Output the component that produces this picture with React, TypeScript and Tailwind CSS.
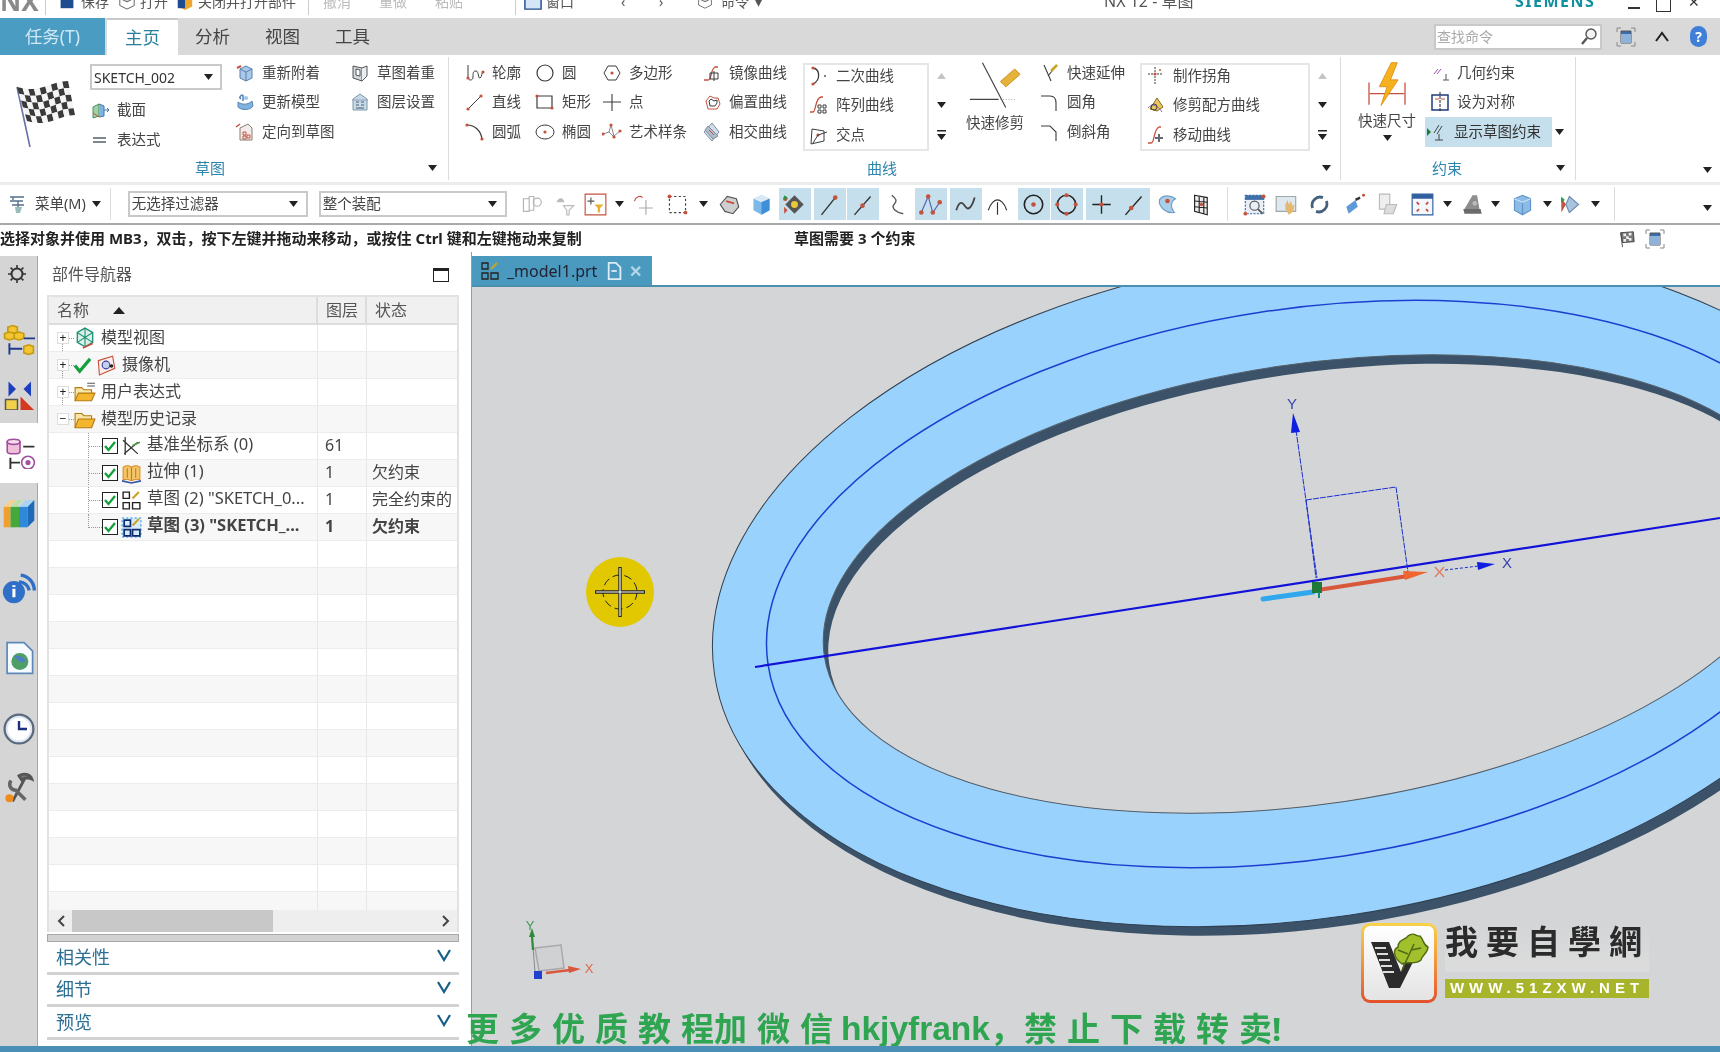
import React from 'react';

const RED = '#c4523e';
const INK = '#3c3c3c';

type Pt = [number, number];

// ---- small icons, 20 unit box
const dot = (x: number, y: number, r = 1.6) => <circle cx={x} cy={y} r={r} fill={RED} stroke="none" />;

const ICONS: Record<string, React.ReactNode> = {
  reattach: <><path d="M5 6l6-3 6 3v9l-6 3-6-3z" fill="#a9c9ea" stroke="#5a7fa8" /><path d="M11 9v9M5 6l6 3 6-3" stroke="#5a7fa8" fill="none" /><path d="M2 5l4-2" stroke={RED} strokeWidth="2" /></>,
  update: <><path d="M3 10c4 3 10 3 14-1l1 5c-2 4-11 5-15 1z" fill="#7fb2de" stroke="#5a86b5" /><path d="M8 9V3m0 0C5 3 4 6 6 7" stroke="#5a86b5" strokeWidth="1.6" fill="none" /><circle cx="11" cy="6" r="2" fill="#9cc6e8" /></>,
  orient: <><path d="M5 6l8-4 4 4v12H5z" fill="#f3ecea" stroke="#8a7a75" /><path d="M8 10h3v3H8zM12 13h3v3h-3zM8 14h3v3H8z" fill="none" stroke={RED} /><path d="M1 5l4-3" stroke={RED} strokeWidth="1.5" /></>,
  weight: <><path d="M3 3l9 2v13l-9-3z" fill="#cfd6dc" stroke="#555" /><path d="M12 5l5-2v10l-5 5" fill="#e8edf0" stroke="#555" /><path d="M6 6l4 1v6l-4-1z" fill="#fff" stroke="#555" /></>,
  layers: <><path d="M3 7l7-5 7 5v11H3z" fill="#c6dbe6" stroke="#7c99a8" /><path d="M6 10h3M11 10h3M6 13h3M11 13h3M6 16h8" stroke="#557" /><path d="M2 8h16" stroke="#99b" /></>,
  section: <><path d="M3 7l6-3v12l-6 2z" fill="#9fd0a8" stroke="#4f8f5f" /><path d="M9 4l5 2v10l-5 1" fill="#7db4e0" stroke="#3f77aa" /><path d="M14 10h5m-2-2l2 2-2 2" stroke="#3f77aa" fill="none" /><path d="M3 13l6 4" stroke={RED} /></>,
  equals: <path d="M3 8h13M3 12h13" stroke="#55606a" strokeWidth="1.6" />,
  profile: <><path d="M3 2v12c0 4 5 4 5 0s0-6 3-6 2 8 4 7 2-6 3-7" stroke={INK} fill="none" />{dot(3, 15)}{dot(18, 9)}</>,
  circle: <circle cx="10" cy="10" r="8" fill="none" stroke={INK} strokeWidth="1.2" />,
  hexagon: <><path d="M6 3h8l4 7-4 7H6l-4-7z" fill="none" stroke={INK} />{dot(10, 10)}</>,
  mirror: <><path d="M2 17h4c4 0 2-10 7-13h3" stroke={RED} strokeWidth="1.3" fill="none" /><path d="M8 10h8v6H8zM12 8v10" stroke={INK} fill="none" /></>,
  line: <><path d="M3 17L16 4" stroke={INK} />{dot(3, 17)}{dot(16, 4)}</>,
  rect: <><path d="M2 4h15v12H2z" fill="none" stroke={INK} strokeWidth="1.2" />{dot(2, 4)}{dot(17, 16)}</>,
  point: <path d="M10 2v17M1 10h18" stroke={INK} strokeWidth="1.1" />,
  offset: <><path d="M4 9l4-5 4 2 4 0 2 6-3 5H6z" fill="none" stroke={RED} /><path d="M7 9l2-2 3 2 3-1 0 3-2 3H8z" fill="none" stroke={INK} /></>,
  arc: <><path d="M2 3c8 0 14 6 15 14" stroke={INK} strokeWidth="1.2" fill="none" />{dot(2, 3)}{dot(17, 17)}</>,
  ellipse: <><ellipse cx="10" cy="10" rx="9" ry="7" fill="none" stroke={INK} />{dot(10, 10)}</>,
  spline: <><path d="M1 12l6-2 2-7 3 11 6-5M7 10l5 5" stroke="#888" fill="none" />{dot(9, 3)}{dot(1, 12)}{dot(12, 15)}{dot(18, 9)}</>,
  intersect: <><path d="M10 1l7 9-7 9-8-9z" fill="#d4dee8" stroke="#7d8fa0" /><path d="M6 4l10 10-5 3L3 8z" fill="#aebccb" stroke="#7d8fa0" /><path d="M7 8l5 5" stroke={RED} /></>,
  conic: <><path d="M4 2c7 1 8 12 0 16" stroke={INK} strokeWidth="1.3" fill="none" />{dot(4, 2)}{dot(4, 18)}<circle cx="16" cy="10" r="1" fill="#555" /></>,
  pattern: <><path d="M1 17h3c3 0 2-14 8-15h2" stroke={RED} strokeWidth="1.3" fill="none" /><path d="M9 10h3v3H9zM14 10h3v3h-3zM9 15h3v3H9zM14 15h3v3h-3z" stroke={INK} fill="none" /></>,
  ipoint: <><path d="M3 4l12 2v10l-13 3z" fill="none" stroke={INK} />{dot(9, 10)}<path d="M9 10L4 18M9 10l9-3" stroke={INK} /></>,
  extend: <><path d="M4 2l7 16M17 2L8 13" stroke={INK} strokeWidth="1.1" /><path d="M17 2l-6 6" stroke="#c9a227" strokeWidth="2.5" /></>,
  fillet: <path d="M1 4h9c4 0 6 3 6 7v8" stroke={INK} fill="none" strokeWidth="1.1" />,
  chamfer: <path d="M1 4h9l6 6v9" stroke={INK} fill="none" strokeWidth="1.1" />,
  corner: <><path d="M9 1v18M2 8h14" stroke={INK} strokeDasharray="2 1" />{dot(9, 8)}{dot(14, 4, 1)}</>,
  recipe: <><path d="M4 14L11 3l6 9-6 4z" fill="#e9c75a" stroke="#8a6a1f" /><path d="M2 13c4-5 10-3 14 4" stroke="#8d6ea8" fill="none" /><circle cx="8" cy="12" r="3" fill="none" stroke="#444" /></>,
  move: <><path d="M2 18h3c4 0 2-13 8-16h2" stroke={RED} strokeWidth="1.3" fill="none" /><path d="M13 9v8M9 13h8" stroke="#667" strokeWidth="2" /></>,
  geom: <><path d="M4 11l4-5M7 11l4-5" stroke="#a050b0" /><path d="M13 17h6M16 11v6" stroke="#555" /></>,
  symm: <><path d="M2 3h16v15H2z" fill="none" stroke="#1f3b7a" strokeWidth="1.5" /><path d="M10 0v20" stroke="#222" strokeDasharray="3 1" /><path d="M5 7l4 0M11 7h4" stroke={RED} /></>,
  showc: <><path d="M1 6l4 4-4 4z" fill="#1b7c34" /><path d="M8 11l5-8M11 12l5-8" stroke="#444" /><path d="M9 18h8M13 12v6" stroke="#444" /></>,
  // toolbar
  menu: <><path d="M2 3h14M5 3v3M2 7h13M4 11h12M10 7v12" stroke="#56708a" strokeWidth="1.4" /><path d="M7 13h7l-2 6H8z" fill="#9bb" /></>,
  g1: <><path d="M3 5h5v11H3zM8 3h4v12H8z" fill="none" stroke="#b5b5b5" /><circle cx="15" cy="8" r="3.5" fill="none" stroke="#b5b5b5" /></>,
  g2: <><path d="M3 8c2-5 6-4 7 0" fill="#bbb" /><path d="M9 11h9l-4 4v4h-2v-4z" fill="none" stroke="#bbb" /></>,
  filter: <><path d="M1 1h18v18H1z" fill="#fff" stroke={RED} /><path d="M6 4v6M3 7h6" stroke="#555" /><path d="M9 10h8l-3 3v4h-2v-4z" fill="#e8b030" /></>,
  g3: <><path d="M3 7c1-4 5-5 7-3" stroke={RED} fill="none" /><path d="M13 6v13M7 13h12" stroke="#aaa" /></>,
  dashrect: <><path d="M3 3h14v14H3z" fill="none" stroke="#444" strokeDasharray="2 2" />{dot(3, 3)}{dot(17, 17)}</>,
  solid: <><path d="M2 10l6-7 8 2 2 7-5 6-7-2z" fill="#cfcfcf" stroke="#555" /><path d="M7 7l7 2" stroke={RED} strokeWidth="1.5" /></>,
  cube: <><path d="M3 5l7-3 7 3v10l-7 4-7-4z" fill="#7db8ea" /><path d="M3 5l7 3 7-3-7-3z" fill="#dbe9f5" /><path d="M10 8v11l7-4V5z" fill="#3f8fd8" /></>,
  snap: <><path d="M10 2l8 8-8 8-8-8z" fill="#555" /><circle cx="10" cy="10" r="3" fill="#e7c83a" />{dot(2, 5, 2)}<path d="M1 12l3 3-3 3z" fill={RED} /><path d="M1 2l3 2-3 2z" fill="#1b9c44" /></>,
  pend: <><path d="M3 19L15 4" stroke="#333" strokeWidth="1.2" />{dot(15, 4, 2)}</>,
  pmid: <><path d="M3 19L17 3" stroke="#333" strokeWidth="1.2" />{dot(10, 11, 2)}</>,
  pcurve: <path d="M5 2c4 3 5 5 2 8s2 7 8 8" stroke="#555" fill="none" strokeWidth="1.2" />,
  pspline: <><path d="M2 17L8 3l4 14 6-9" stroke="#5560b0" fill="none" />{dot(8, 3, 2)}{dot(2, 17, 2)}{dot(12, 17, 2)}{dot(18, 8, 2)}</>,
  pwave: <path d="M2 15c3-10 6-6 8-3s5 2 8-8" stroke="#444" fill="none" strokeWidth="1.6" />,
  ptan: <path d="M10 19V8M2 15c2-7 6-9 8-9s6 2 8 9" stroke="#333" fill="none" />,
  pcirc: <><circle cx="10" cy="10" r="8" fill="none" stroke="#222" strokeWidth="1.4" />{dot(10, 10, 2)}</>,
  pquad: <><circle cx="10" cy="10" r="8" fill="none" stroke="#222" strokeWidth="1.4" />{dot(10, 2, 1.8)}{dot(10, 18, 1.8)}{dot(2, 10, 1.8)}{dot(18, 10, 1.8)}</>,
  pplus: <><path d="M10 2v16M2 10h16" stroke="#222" strokeWidth="1.2" />{dot(10, 10, 1.8)}</>,
  pline: <><path d="M3 19L17 3" stroke="#222" strokeWidth="1.2" />{dot(8, 13, 2)}</>,
  psurf: <><path d="M3 6c3-5 10-4 14-1-4 2-5 7-1 12-6 1-14-4-13-11z" fill="#a9cfe9" stroke="#6f9cc0" />{dot(10, 7, 2)}</>,
  pgrid: <><path d="M4 2l11 2v15L4 16z" fill="#eee" stroke="#222" /><path d="M8 3v14M12 4v14M4 7l11 1M4 12l11 1" stroke="#222" />{dot(10, 10, 1.5)}</>,
  fit: <><path d="M2 2h16v16H2z" fill="#e7eef6" stroke="#3f6fa8" strokeDasharray="2 1" /><path d="M2 2h16v4H2z" fill="#3f6fa8" /><circle cx="10" cy="11" r="4" fill="none" stroke="#555" /><path d="M13 14l4 4" stroke="#555" strokeWidth="1.5" />{dot(2, 18)}{dot(18, 3)}</>,
  pan: <><path d="M1 3h17v13H1z" fill="#dfe7ef" stroke="#9aa" /><path d="M9 10l2-4 1 4 2-3 1 4 2-1-1 6-4 3-3-5z" fill="#e5b870" /></>,
  rotate: <path d="M4 13a7 7 0 0 1 9-9M16 7a7 7 0 0 1-9 9" stroke="#45617d" strokeWidth="2.4" fill="none" />,
  brush: <><path d="M2 12l8-6 2 6-8 6z" fill="#5f9ad8" /><path d="M10 6l4-2" stroke="#333" strokeWidth="2" />{dot(17, 2, 1.3)}</>,
  gray2: <><path d="M3 1h9v13H3z" fill="#eee" stroke="#bbb" /><path d="M9 10l9 0-3 8H7z" fill="#ddd" stroke="#bbb" /></>,
  views: <><path d="M1 1h18v18H1z" fill="#f4f7fb" stroke="#2f5f9f" /><path d="M1 1h18v4H1z" fill="#2f5f9f" /><path d="M5 8l2 2M15 8l-2 2M5 16l2-2M15 16l-2-2" stroke={RED} strokeWidth="1.6" /></>,
  camera: <><path d="M3 14L10 2h4l2 12z" fill="#8d8d8d" /><path d="M2 14h15l1 4H3z" fill="#6b6b6b" /><circle cx="12" cy="9" r="2" fill="#bbb" /></>,
  box: <><path d="M3 5l7-3 7 3v10l-7 4-7-4z" fill="#8bbbe6" stroke="#5f95c7" /><path d="M10 8v11" stroke="#5f95c7" /><path d="M3 5l7 3 7-3" stroke="#cfe3f5" fill="none" /></>,
  clip: <><path d="M9 3l8 7-8 7-3-7z" fill="#a8c4de" stroke="#6f8faf" /><path d="M2 4l4 6-4 7z" fill={RED} /><path d="M2 3l3 3-3 2z" fill="#1b9c44" /></>,
  // rail
  assembly: <><path d="M3 2l3-1 3 1v3l-3 1-3-1z" fill="#f3c530" stroke="#c59a10" /><path d="M1 6l3-1 3 1v3l-3 1-3-1zM7 6l3-1 3 1v3l-3 1-3-1z" fill="#f3c530" stroke="#c59a10" /><path d="M13 14l3-1 3 1v4l-3 1-3-1z" fill="#f3c530" stroke="#c59a10" /><path d="M4 12v7M4 15.5h8M13 9h7" stroke="#1e3a8a" strokeWidth="1.2" /></>,
  bowtie: <><path d="M3 1l5 5-5 5zM18 1l-5 5 5 5z" fill="#1c3fbe" /><path d="M1 13h8v7H1z" fill="#f3d04a" stroke="#555" /><path d="M11 20v-9l9 9z" fill="#d43a1f" /></>,
  dbtree: <><path d="M2 3v6c0 2 8 2 8 0V3z" fill="#f0c0d8" stroke="#a050a0" /><ellipse cx="6" cy="3" rx="4" ry="1.6" fill="#f8dcea" stroke="#a050a0" /><path d="M12 6h7M4 13v7M4 16h6" stroke="#333" strokeWidth="1.2" /><circle cx="15" cy="16" r="4" fill="none" stroke="#a050a0" /><circle cx="15" cy="16" r="1.6" fill="#a050a0" /></>,
  books: <><path d="M1 7l4-4h3l-3 4z" fill="#f7cf8a" /><path d="M1 7h4v12H1z" fill="#f0a030" /><path d="M5 7l4-4h3l-3 4z" fill="#b8e0a8" /><path d="M5 7h5v12H5z" fill="#45a838" /><path d="M10 7l4-4h5l-4 4z" fill="#a8d4f4" /><path d="M10 7h5v12h-5z" fill="#2f88d8" /><path d="M15 7l4-4v12l-4 4z" fill="#1e6ab8" /></>,
  info: <><path d="M11 3a9 9 0 0 1 8 9M10 7a6 6 0 0 1 6 5" stroke="#2f6fc8" strokeWidth="2" fill="none" /><circle cx="7" cy="13" r="6.5" fill="#2f6fc8" /><path d="M7 11v5M7 9v1" stroke="#fff" strokeWidth="1.8" /></>,
  globe: <><path d="M3 1h10l5 5v13H3z" fill="#f6fbff" stroke="#5d88b8" /><circle cx="10.5" cy="12" r="5" fill="#4e9f66" /><path d="M7 9c3-1 6 0 7 3-3 2-5-1-7-3z" fill="#4c7fc0" /></>,
  clock: <><circle cx="10" cy="10" r="9" fill="#dfe8f3" stroke="#5a6a7c" strokeWidth="1.4" /><circle cx="10" cy="10" r="7" fill="#fff" /><path d="M10 5v5h5" stroke="#1f2f80" strokeWidth="1.5" fill="none" /></>,
  tools: <><path d="M6 19L14 4M10 3c3-2 7-1 8 2-2-1-5-1-6 1z" stroke="#555" strokeWidth="1.8" fill="#777" /><path d="M5 6c-2 3 0 6 3 6l6 6" stroke="#666" strokeWidth="2.2" fill="none" /><circle cx="4" cy="17" r="2.5" fill="#ee8c1e" /></>,
  gear: <><circle cx="10" cy="10" r="5.5" fill="none" stroke="#333" strokeWidth="2" /><path d="M10 1v3M10 16v3M1 10h3M16 10h3M3.6 3.6l2 2M14.4 14.4l2 2M3.6 16.4l2-2M14.4 5.6l2-2" stroke="#333" strokeWidth="1.6" /></>,
  // tree
  tview: <><path d="M10 1l7 4v9l-7 4-7-4V5z" fill="#d8f0e8" stroke="#1f8f74" strokeWidth="1.2" /><path d="M10 1v17M3 5l14 9M17 5L3 14" stroke="#1f8f74" /><path d="M8 19l9-4" stroke={RED} strokeWidth="1.5" /></>,
  check: <path d="M2 10l5 6L18 3" stroke="#14a03c" strokeWidth="3.4" fill="none" />,
  tcam: <><path d="M3 6l13-4 2 11L4 19z" fill="#fbeeea" stroke={RED} /><circle cx="10" cy="10" r="3.5" fill="#c5cff0" stroke="#3040a0" /><circle cx="15" cy="11" r="1.6" fill="#222" /></>,
  folder: <><path d="M1 18V5h6l2 2h7v3" fill="#f8e6a8" stroke="#b57a10" /><path d="M1 18l3-8h15l-3 8z" fill="#f3b62e" stroke="#b57a10" /></>,
  folderx: <><path d="M1 18V6h6l2 2h7v3" fill="#f8e6a8" stroke="#b57a10" /><path d="M1 18l3-7h15l-3 7z" fill="#f3b62e" stroke="#b57a10" /><path d="M12 2h7M12 4.5h7" stroke="#555" /></>,
  datum: <><path d="M4 1v17M2 4l14 13M3 17l13-11" stroke="#333" strokeWidth="1.2" /><path d="M11 9l7-3" stroke="#4a9c40" strokeWidth="1.6" /></>,
  extrude: <><path d="M2 4c3-2 5-2 8 0 3-2 5-2 8 0v12c-3-1-5-1-8 1-3-2-5-2-8-1z" fill="#f4c468" stroke="#d98b20" /><path d="M10 4v13M6 5v9M14 5v9" stroke="#c77a10" /><path d="M1 17l9 2 9-2" stroke="#3554a8" strokeWidth="1.6" fill="none" /></>,
  sketch: <><path d="M2 2h6v6H2zM11 12h7v6h-7zM2 12h6v6H2z" fill="none" stroke="#222" strokeWidth="1.3" /><path d="M11 8l6-6" stroke="#c9a227" strokeWidth="2" /></>,
  sketchact: <><path d="M1 1h18v18H1z" fill="#d4ecfb" stroke="#2a8fe0" strokeDasharray="2 2" /><path d="M3 3h6v6H3zM11 12h7v6h-7zM3 12h6v6H3z" fill="none" stroke="#102a70" strokeWidth="1.6" /><path d="M11 8l6-6" stroke="#c9a227" strokeWidth="2" /></>,
  save: <><path d="M2 1h16v18H2z" fill="#1f4b8f" /><path d="M5 1h10v6H5z" fill="#dfe8f3" /></>,
  open: <><path d="M2 7l8-4 8 4-8 4z" fill="#cfcfcf" stroke="#555" /><path d="M2 7v8l8 4 8-4V7" fill="none" stroke="#555" /></>,
  orange: <><path d="M2 8l8-5 8 5v8l-8 4-8-4z" fill="#f0a62a" /><path d="M2 8h8v10H2z" fill="#1f4b8f" /></>,
  windowi: <><path d="M1 1h18v18H1z" fill="#d3e5f7" stroke="#1f4b8f" strokeWidth="1.6" /></>,
  dock: <><path d="M1 5V1h4M15 1h4v4M19 15v4h-4M5 19H1v-4" stroke="#888" fill="none" /><path d="M5 4h10v12H5z" fill="#3a6ea8" stroke="#555" /><path d="M5 7h10v9H5z" fill="#8fb3d8" /></>,
  docki: <><path d="M3 1h8l5 5v13H3z" fill="#4a9ac0" stroke="#dcecf7" strokeWidth="2" /><path d="M6 10h6" stroke="#dcecf7" strokeWidth="2" /></>,
};

function Ic({ n, s = 20, className = '' }: { n: string; s?: number; className?: string }) {
  return (
    <svg width={s} height={s} viewBox="0 0 20 20" className={'shrink-0 ' + className}>
      {ICONS[n]}
    </svg>
  );
}

function Down({ className = '' }: { className?: string }) {
  return (
    <svg width="9" height="6" viewBox="0 0 9 6" className={'shrink-0 ' + className}>
      <path d="M0 0h9L4.5 6z" fill="#222" />
    </svg>
  );
}

function GalleryArrows() {
  return (
    <div className="w-[24px] h-[87px] mt-[8px] flex flex-col items-center justify-between py-[10px] shrink-0">
      <svg width="9" height="6" viewBox="0 0 9 6"><path d="M0 6h9L4.5 0z" fill="#c4c4c4" /></svg>
      <Down />
      <svg width="9" height="10" viewBox="0 0 9 10"><path d="M0 0h9v1.5H0zM0 4h9L4.5 10z" fill="#222" /></svg>
    </div>
  );
}

function Cmd({ n, label, className = '' }: { n: string; label: string; className?: string }) {
  return (
    <div className={'flex items-center h-[29.5px] gap-[7px] whitespace-nowrap shrink-0 ' + className}>
      <Ic n={n} />
      <span>{label}</span>
    </div>
  );
}

function Col({ items, className = '' }: { items: [string, string][]; className?: string }) {
  return (
    <div className={'flex flex-col pt-[3px] shrink-0 ' + className}>
      {items.map(([n, l]) => <Cmd key={l} n={n} label={l} />)}
    </div>
  );
}

function Gallery({ items, className = '' }: { items: [string, string][]; className?: string }) {
  return (
    <div className={'h-[88px] mt-[8px] border-2 border-[#e6e6e6] pl-[4px] shrink-0 ' + className}>
      <div className="-mt-[4px] flex flex-col">
        {items.map(([n, l]) => <Cmd key={l} n={n} label={l} className="gap-[6px]" />)}
      </div>
    </div>
  );
}

function GroupFoot({ label, labelClass, arrowClass }: { label: string; labelClass: string; arrowClass: string }) {
  return (
    <div className="h-[24px] pt-[4px] flex items-center text-[#2d86ad] text-[15px]">
      <span className={labelClass}>{label}</span>
      <Down className={'ml-auto ' + arrowClass} />
    </div>
  );
}

function Flag() {
  const P = (u: number, v: number): Pt => {
    const wave = Math.sin(u * 5) * 3;
    const x = 17 + u * 51 + v * (10 + u * -3);
    const y = 83 - u * 3 + v * 34 + wave - 55;
    return [x - 14, y];
  };
  const cells: React.ReactNode[] = [];
  for (let i = 0; i < 9; i++) {
    for (let j = 0; j < 5; j++) {
      const a = P(i / 9, j / 5), b = P((i + 1) / 9, j / 5), c = P((i + 1) / 9, (j + 1) / 5), d = P(i / 9, (j + 1) / 5);
      cells.push(<polygon key={i + '-' + j} points={[a, b, c, d].map((p) => p.join(',')).join(' ')} fill={(i + j) % 2 ? '#f4f4f4' : '#3a3a3a'} />);
    }
  }
  return (
    <svg width="66" height="72" viewBox="0 16 66 72" className="shrink-0">
      <path d="M3 28l13 60" stroke="#6a70a8" strokeWidth="1.6" />
      {cells}
    </svg>
  );
}

function Ribbon() {
  return (
    <div className="h-[127px] flex text-[14.5px] text-[#444] bg-white shrink-0">
      {/* 草图 */}
      <div className="w-[449px] border-r border-[#dcdcdc] my-[2px] flex flex-col shrink-0">
        <div className="flex h-[99px] -mt-[2px]">
          <div className="w-[90px] pl-[14px] pt-[20px] shrink-0"><Flag /></div>
          <div className="w-[145px] shrink-0">
            <div className="w-[132px] h-[26px] mt-[9px] border-2 border-[#c9c9c9] flex items-center pl-[2px] pr-[7px] text-[#333] text-[14px] justify-between">
              <span>SKETCH_002</span><Down />
            </div>
            <Cmd n="section" label="截面" className="mt-[5px] h-[30px]" />
            <Cmd n="equals" label="表达式" className="h-[30px]" />
          </div>
          <Col className="w-[115px]" items={[['reattach', '重新附着'], ['update', '更新模型'], ['orient', '定向到草图']]} />
          <Col items={[['weight', '草图着重'], ['layers', '图层设置']]} />
        </div>
        <GroupFoot label="草图" labelClass="ml-[195px]" arrowClass="mr-[11px]" />
      </div>
      {/* 曲线 */}
      <div className="w-[892px] border-r border-[#dcdcdc] my-[2px] flex flex-col shrink-0">
        <div className="flex h-[99px] -mt-[2px] pl-[16px]">
          <Col className="w-[70px]" items={[['profile', '轮廓'], ['line', '直线'], ['arc', '圆弧']]} />
          <Col className="w-[67px]" items={[['circle', '圆'], ['rect', '矩形'], ['ellipse', '椭圆']]} />
          <Col className="w-[100px]" items={[['hexagon', '多边形'], ['point', '点'], ['spline', '艺术样条']]} />
          <Col className="w-[101px]" items={[['mirror', '镜像曲线'], ['offset', '偏置曲线'], ['intersect', '相交曲线']]} />
          <Gallery className="w-[126px]" items={[['conic', '二次曲线'], ['pattern', '阵列曲线'], ['ipoint', '交点']]} />
          <GalleryArrows />
          <div className="w-[84px] flex flex-col items-center pt-[5px] shrink-0">
            <svg width="56" height="52" viewBox="0 0 60 58">
              <path d="M16 3l26 50M2 44h32" stroke="#444" strokeWidth="1.3" />
              <path d="M36 24l16-14 6 6-16 14z" fill="#e5b23a" stroke="#c99020" />
              <path d="M36 44h16" stroke="#999" strokeDasharray="1 2" />
            </svg>
            <span>快速修剪</span>
          </div>
          <Col className="w-[103px] pl-[3px]" items={[['extend', '快速延伸'], ['fillet', '圆角'], ['chamfer', '倒斜角']]} />
          <Gallery className="w-[170px]" items={[['corner', '制作拐角'], ['recipe', '修剪配方曲线'], ['move', '移动曲线']]} />
          <GalleryArrows />
        </div>
        <GroupFoot label="曲线" labelClass="ml-[418px]" arrowClass="mr-[9px]" />
      </div>
      {/* 约束 */}
      <div className="w-[235px] border-r border-[#dcdcdc] my-[2px] flex flex-col shrink-0">
        <div className="flex h-[99px] -mt-[2px] pl-[9px]">
          <div className="w-[74px] flex flex-col items-center pt-[6px] shrink-0">
            <svg width="44" height="48" viewBox="0 0 48 56">
              <path d="M3 25v26M45 25v26M4 38h40" stroke={RED} strokeWidth="1.5" />
              <path d="M29 2L15 30h9l-7 22 20-30h-9l8-20z" fill="#f4b21e" stroke="#e08a10" />
            </svg>
            <span className="mt-[1px]">快速尺寸</span>
            <Down className="mt-[3px]" />
          </div>
          <div className="flex flex-col pt-[3px] pl-[6px]">
            <Cmd n="geom" label="几何约束" />
            <Cmd n="symm" label="设为对称" />
            <div className="flex items-center">
              <Cmd n="showc" label="显示草图约束" className="bg-[#c5e0ec] w-[127px] gap-[8px] -ml-[5px] pl-[1px] text-[#333]" />
              <Down className="ml-[3px]" />
            </div>
          </div>
        </div>
        <GroupFoot label="约束" labelClass="ml-[91px]" arrowClass="mr-[10px]" />
      </div>
      <div className="flex-1 flex justify-end items-end pb-[9px] pr-[8px]"><Down /></div>
    </div>
  );
}

type Tool = { n?: string; on?: boolean; arrow?: boolean; bar?: boolean; cls: string };

const TOOLS: Tool[] = [
  { n: 'g1', cls: 'ml-[9px]' },
  { n: 'g2', cls: 'ml-[1px]' },
  { n: 'filter', cls: '-ml-[1px]' },
  { arrow: true, cls: 'ml-[3.5px]' },
  { n: 'g3', cls: 'ml-[2.5px]' },
  { n: 'dashrect', cls: 'ml-[3px]' },
  { arrow: true, cls: 'ml-[5.5px]' },
  { n: 'solid', cls: 'ml-[5.5px]' },
  { n: 'cube', cls: 'ml-[0px]' },
  { n: 'snap', on: true, cls: 'ml-[1px]' },
  { n: 'pend', on: true, cls: 'ml-[3px]' },
  { n: 'pmid', on: true, cls: 'ml-[1px]' },
  { n: 'pcurve', cls: 'ml-[3px]' },
  { n: 'pspline', on: true, cls: 'ml-[1px]' },
  { n: 'pwave', on: true, cls: 'ml-[3px]' },
  { n: 'ptan', cls: 'ml-[0px]' },
  { n: 'pcirc', on: true, cls: 'ml-[4px]' },
  { n: 'pquad', on: true, cls: 'ml-[1px]' },
  { n: 'pplus', on: true, cls: 'ml-[3px]' },
  { n: 'pline', on: true, cls: 'ml-[0px]' },
  { n: 'psurf', cls: 'ml-[2px]' },
  { n: 'pgrid', cls: 'ml-[2px]' },
  { bar: true, cls: 'ml-[9px]' },
  { n: 'fit', cls: 'ml-[11px]' },
  { n: 'pan', cls: 'ml-[0px]' },
  { n: 'rotate', cls: 'ml-[1px]' },
  { n: 'brush', cls: 'ml-[4px]' },
  { n: 'gray2', cls: 'ml-[0px]' },
  { n: 'views', cls: 'ml-[3px]' },
  { arrow: true, cls: 'ml-[4.5px]' },
  { n: 'camera', cls: 'ml-[4.5px]' },
  { arrow: true, cls: 'ml-[2.5px]' },
  { n: 'box', cls: 'ml-[6.5px]' },
  { arrow: true, cls: 'ml-[4.5px]' },
  { n: 'clip', cls: 'ml-[2.5px]' },
  { arrow: true, cls: 'ml-[4.5px]' },
  { bar: true, cls: 'ml-[13.5px]' },
];

function Toolbar() {
  return (
    <div className="h-[43px] border-t-[3px] border-[#ececec] border-b-[2px] border-b-[#a9a9a9] flex items-center text-[14.5px] text-[#444] bg-white shrink-0">
      <Ic n="menu" className="ml-[8px]" />
      <span className="ml-[7px]">菜单(M)</span>
      <Down className="ml-[6px]" />
      <div className="w-px h-[32px] bg-[#dcdcdc] ml-[9px]" />
      <div className="ml-[17px] w-[180px] h-[26px] border-2 border-[#c9c9c9] flex items-center justify-between pl-[2px] pr-[8px]"><span>无选择过滤器</span><Down /></div>
      <div className="ml-[11px] w-[188px] h-[26px] border-2 border-[#c9c9c9] flex items-center justify-between pl-[2px] pr-[8px]"><span>整个装配</span><Down /></div>
      {TOOLS.map((t, i) => {
        if (t.arrow) return <Down key={i} className={t.cls} />;
        if (t.bar) return <div key={i} className={'w-px h-[34px] bg-[#dcdcdc] shrink-0 ' + t.cls} />;
        return (
          <div key={i} className={'w-[32px] h-[32px] flex items-center justify-center shrink-0 ' + t.cls + (t.on ? ' bg-[#c5e0ec]' : '')}>
            <Ic n={t.n!} s={23} />
          </div>
        );
      })}
      <Down className="ml-auto mr-[8px] mt-[8px]" />
    </div>
  );
}

type Row = { level: 0 | 1; n: string; name: string; box?: string; check?: boolean; layer?: string; state?: string; bold?: boolean };

const ROWS: Row[] = [
  { level: 0, n: 'tview', name: '模型视图', box: '+' },
  { level: 0, n: 'tcam', name: '摄像机', box: '+', check: true },
  { level: 0, n: 'folderx', name: '用户表达式', box: '+' },
  { level: 0, n: 'folder', name: '模型历史记录', box: '−' },
  { level: 1, n: 'datum', name: '基准坐标系 (0)', layer: '61' },
  { level: 1, n: 'extrude', name: '拉伸 (1)', layer: '1', state: '欠约束' },
  { level: 1, n: 'sketch', name: '草图 (2) "SKETCH_0...', layer: '1', state: '完全约束的' },
  { level: 1, n: 'sketchact', name: '草图 (3) "SKETCH_...', layer: '1', state: '欠约束', bold: true },
];

function TreeRow({ row, i }: { row?: Row; i: number }) {
  const bg = i % 2 ? 'bg-[#f7f7f7]' : 'bg-white';
  return (
    <div className={'flex h-[27px] border-b border-[#ececec] text-[16px] text-[#444] ' + bg + (row?.bold ? ' font-bold text-[#333]' : '')}>
      <div className="w-[269px] border-r border-[#e8e8e8] flex items-center relative overflow-hidden whitespace-nowrap shrink-0">
        {row && row.level === 0 && (
          <>
            {i < 3 && <div className="absolute left-[13px] top-[13px] h-[27px] border-l border-dotted border-[#999]" />}
            <div className="relative ml-[8px] w-[12px] h-[12px] bg-white border border-[#ddd] flex items-center justify-center text-[12px] leading-none text-[#222]">{row.box}</div>
            <div className="w-[5px] border-t border-dotted border-[#999]" />
            {row.check && <Ic n="check" s={19} className="-ml-[1px] mr-[3px]" />}
            <Ic n={row.n} s={22} />
            <span className="ml-[5px] -mt-[2px]">{row.name}</span>
          </>
        )}
        {row && row.level === 1 && (
          <>
            <div className={'absolute left-[39px] top-0 border-l border-dotted border-[#999] ' + (i === 7 ? 'h-[14px]' : 'h-[27px]')} />
            <div className="ml-[40px] w-[13px] border-t border-dotted border-[#999]" />
            <div className="w-[16px] h-[16px] border-[1.5px] border-[#222] bg-white flex items-center justify-center">
              <svg width="12" height="12" viewBox="0 0 12 12"><path d="M1 6l3.5 4L11 2" stroke="#14a03c" strokeWidth="2.4" fill="none" /></svg>
            </div>
            <Ic n={row.n} s={21} className="ml-[3px]" />
            <span className="ml-[5px] text-[16.5px] -mt-[3px]">{row.name}</span>
          </>
        )}
      </div>
      <div className="w-[49px] border-r border-[#e8e8e8] pl-[7px] flex items-center shrink-0"><span className="-mt-[3px]">{row?.layer}</span></div>
      <div className="flex-1 pl-[5px] flex items-center whitespace-nowrap overflow-hidden"><span className="-mt-[3px]">{row?.state}</span></div>
    </div>
  );
}

function Navigator() {
  const blanks = Array.from({ length: 14 }, (_, k) => k + 8);
  return (
    <div className="w-[434px] border-r border-[#9a9a9a] bg-white flex flex-col pl-[9px] pr-[13px] shrink-0">
      <div className="h-[43px] flex items-center justify-between pl-[5px] pr-[9px] text-[16px] text-[#555] shrink-0">
        <span>部件导航器</span>
        <div className="w-[16px] h-[14px] border-[1.5px] border-[#222] border-t-[3px] mt-[3px]" />
      </div>
      <div className="border-2 border-[#e2e2e2] border-b-0 flex flex-col shrink-0 w-[412px]">
        <div className="h-[28px] flex bg-[#f0f0f0] border-b-2 border-[#dcdcdc] text-[16px] text-[#555]">
          <div className="w-[269px] border-r-2 border-[#dcdcdc] flex items-center pl-[8px]">
            <span>名称</span>
            <svg width="12" height="7" viewBox="0 0 12 7" className="ml-[24px]"><path d="M0 7h12L6 0z" fill="#222" /></svg>
          </div>
          <div className="w-[49px] border-r-2 border-[#dcdcdc] flex items-center pl-[8px]">图层</div>
          <div className="flex-1 flex items-center pl-[8px]">状态</div>
        </div>
        <div className="h-[585px] overflow-hidden">
          {ROWS.map((r, i) => <TreeRow key={i} row={r} i={i} />)}
          {blanks.map((k) => <TreeRow key={k} i={k} />)}
        </div>
        <div className="h-[22px] bg-[#eeeeee] flex items-center text-[#444]">
          <svg width="10" height="12" viewBox="0 0 10 12" className="ml-[7px]"><path d="M8 1L3 6l5 5" stroke="#444" strokeWidth="2" fill="none" /></svg>
          <div className="ml-[6px] w-[201px] h-full bg-[#c8c8c8]" />
          <svg width="10" height="12" viewBox="0 0 10 12" className="ml-auto mr-[6px]"><path d="M2 1l5 5-5 5" stroke="#444" strokeWidth="2" fill="none" /></svg>
        </div>
      </div>
      <div className="h-[8px] mt-[2px] bg-[#d2d2d2] border border-[#a8a8a8] w-[412px] shrink-0" />
      {['相关性', '细节', '预览'].map((t) => (
        <div key={t} className="h-[32.5px] w-[412px] border-b-[3px] border-[#d2d2d2] flex items-center justify-between pl-[9px] pr-[8px] text-[18px] text-[#2c6f92] shrink-0">
          <span className="mt-[1px]">{t}</span>
          <svg width="14" height="13" viewBox="0 0 14 13" className="-mt-[3px]"><path d="M1 1l6 10 6-10" stroke="#1a5f86" strokeWidth="2.2" fill="none" /></svg>
        </div>
      ))}
    </div>
  );
}

function Rail() {
  const item = 'h-[50px] flex items-center justify-center shrink-0';
  return (
    <div className="w-[38px] bg-[#d5d5d5] border-r border-[#a8a8a8] mt-[4px] flex flex-col shrink-0">
      <div className="h-[36px] flex items-center justify-center shrink-0 -ml-[4px]"><Ic n="gear" /></div>
      <div className={item + ' mt-[23px]'}><Ic n="assembly" s={32} /></div>
      <div className={item + ' mt-[5px]'}><Ic n="bowtie" s={30} /></div>
      <div className="h-[60px] mt-[3px] w-[39px] bg-white flex items-center justify-center shrink-0"><Ic n="dbtree" s={32} /></div>
      <div className={item + ' mt-[4px]'}><Ic n="books" s={34} /></div>
      <div className={item + ' mt-[25px]'}><Ic n="info" s={34} /></div>
      <div className={item + ' mt-[21px]'}><Ic n="globe" s={34} /></div>
      <div className={item + ' mt-[21px]'}><Ic n="clock" s={32} /></div>
      <div className={item + ' mt-[8px]'}><Ic n="tools" s={32} /></div>
    </div>
  );
}

function Model() {
  const outer = { cx: 1300, cy: 587, rx: 592, ry: 332, transform: 'rotate(-8.5 1300 587)' };
  const inner = { cx: 1311, cy: 584, rx: 492, ry: 220, transform: 'rotate(-8.4 1311 584)' };
  return (
    <svg viewBox="472 287 1248 759" width="1248" height="759" className="absolute inset-0">
      <defs>
        <clipPath id="hole"><ellipse {...inner} /></clipPath>
      </defs>
      <g transform="translate(5 9)"><ellipse {...outer} fill="#3b5268" /></g>
      <ellipse {...outer} fill="#99d2fd" stroke="#2f3f4f" strokeWidth="1" />
      <ellipse {...inner} fill="#3b5268" />
      <g clipPath="url(#hole)">
        <g transform="translate(5 9)"><ellipse {...inner} fill="#d3d5d7" /></g>
      </g>
      <ellipse {...inner} fill="none" stroke="#55606a" strokeWidth="1" />
      <ellipse cx="1303" cy="584" rx="541" ry="275" transform="rotate(-8.6 1303 584)" fill="none" stroke="#1c3fd0" strokeWidth="1.5" />
      <path d="M755 667L1720 518" stroke="#1212d8" strokeWidth="2.2" />

      {/* sketch csys */}
      <g stroke="#1c2fd0" strokeWidth="1" fill="none">
        <path d="M1296 430L1317 578M1306 500l10 78M1306 500l90-13 12 85" strokeDasharray="6 1" />
        <path d="M1445 570l34-4" strokeDasharray="3 2" />
      </g>
      <path d="M1293 413l-2 20 9-1z" fill="#0e1fe0" />
      <path d="M1477 562l18 2-17 6z" fill="#0e1fe0" />
      <path d="M1263 599l50-7" stroke="#2fa8ee" strokeWidth="5" strokeLinecap="round" />
      <path d="M1318 590l90-14" stroke="#d9573a" strokeWidth="4" />
      <path d="M1403 571l25 1-23 8z" fill="#f0662e" />
      <rect x="1312" y="582" width="10" height="11" fill="#1f7a3a" />
      <path d="M1319 592v6" stroke="#0f8a8a" strokeWidth="2" />
      <path d="M1435 567l9 10M1444 567l-9 10" stroke="#e0785a" strokeWidth="1.2" />
      <text x="1292" y="409" fontSize="15" textAnchor="middle" fill="#3a42b0" fontFamily="Liberation Sans">Y</text>
      <text x="1507" y="568" fontSize="15" textAnchor="middle" fill="#3a42b0" fontFamily="Liberation Sans">X</text>

      {/* cursor spot */}
      <ellipse cx="620" cy="592" rx="34" ry="35" fill="#e1c800" />
      <circle cx="620" cy="592" r="17" fill="none" stroke="#222" strokeWidth="1" strokeDasharray="8 4" />
      <path d="M620 567v50M595 592h50" stroke="#222" strokeWidth="3.4" />
      <path d="M620 568v48M596 592h48" stroke="#fff" strokeWidth="1.2" />

      {/* absolute csys */}
      <path d="M535 948l26-3 3 23-25 3z" fill="#cfd1d3" stroke="#a8a8a8" strokeWidth="1.5" />
      <path d="M535 972l-3-38" stroke="#888" strokeWidth="1" />
      <path d="M533 950l-1-14" stroke="#2f8a3c" strokeWidth="2.2" />
      <path d="M532 928l-3 9 6 0z" fill="#2f8a3c" />
      <path d="M546 973l24-3" stroke="#d9573a" strokeWidth="2.4" />
      <path d="M568 966l13 3-12 4z" fill="#d9573a" />
      <rect x="534" y="971" width="8" height="8" fill="#2040d0" />
      <text x="530" y="930" fontSize="13" textAnchor="middle" fill="#3f9a55" fontFamily="Liberation Sans">Y</text>
      <text x="589" y="973" fontSize="13" textAnchor="middle" fill="#e0684a" fontFamily="Liberation Sans">X</text>
    </svg>
  );
}

function Logo() {
  return (
    <div className="absolute left-[889px] top-[636px] flex gap-[8px]">
      <div className="w-[76px] h-[80px] rounded-[9px] p-[3px] bg-gradient-to-b from-[#f8d24a] to-[#e2502c] shrink-0">
        <div className="w-full h-full rounded-[6px] bg-gradient-to-b from-white to-[#e4e4e4]">
          <svg width="70" height="74" viewBox="0 0 70 74">
            <path d="M7 16h18l12 30 4-12h9L36 62H25z" fill="#2b2b2b" />
            <path d="M11 22h11M13 28h11M15 34h11M17 40h11M19 46h11" stroke="#ddd" strokeWidth="2" />
            <path d="M38 38c-8-6-10-14-4-17 0-8 8-7 10-11 6-5 8 1 12 0 4 4 3 9 8 11 0 6-6 8-7 13-5 5-13 1-19 4z" fill="#a2bf2c" stroke="#4f6a14" strokeWidth="1.4" />
            <path d="M38 44l12-26M44 28l-10-4M47 24l10-2" stroke="#4f6a14" strokeWidth="1.5" />
          </svg>
        </div>
      </div>
      <div className="w-[204px] flex flex-col">
        <div className="h-[49px] text-[33px] leading-[38px] font-bold text-[#2b2b2b] tracking-[8px] whitespace-nowrap bg-gradient-to-b from-transparent to-[#dcdcdc]">我要自學網</div>
        <div className="h-[19px] mt-[7px] bg-[#a8b52a] text-white font-bold text-[15px] tracking-[5px] flex items-center justify-center font-['Liberation_Sans',sans-serif] whitespace-nowrap">WWW.51ZXW.NET</div>
      </div>
    </div>
  );
}

function Watermark() {
  const cjk = 'w-[33px] text-center';
  return (
    <div className="absolute -left-[6px] top-[722px] h-[40px] flex items-center text-[33px] leading-[40px] font-bold text-[#2fa552] whitespace-nowrap gap-[10px]">
      {['更', '多', '优', '质', '教'].map((c) => <span key={c} className={cjk}>{c}</span>)}
      <span>程加</span>
      {['微', '信'].map((c) => <span key={c} className={cjk}>{c}</span>)}
      <span className="font-['Liberation_Sans',sans-serif] text-[33.5px] -ml-[2px]">hkjyfrank</span>
      <span className="w-[24px] -ml-[10px]">，</span>
      {['禁', '止', '下', '载', '转', '卖'].map((c) => <span key={c} className={cjk}>{c}</span>)}
      <span className="-ml-[10px]">!</span>
    </div>
  );
}

export default function App() {
  return (
    <div className="w-[1720px] h-[1052px] overflow-hidden bg-white flex flex-col font-['Noto_Sans','Noto_Sans_CJK_SC',sans-serif] blur-[0.35px]">
      {/* window title, cut off by the capture */}
      <div className="h-[18px] overflow-hidden shrink-0">
        <div className="flex items-center h-[20px] -mt-[9px] text-[14px] text-[#555] whitespace-nowrap">
          <span className="text-[26px] font-bold text-[#8a8a8a] w-[45px] leading-none">NX</span>
          <div className="w-px h-[20px] bg-[#ccc] mr-[13px] mt-[8px]" />
          <Ic n="save" s={16} /><span className="ml-[6px] w-[37px]">保存</span>
          <Ic n="open" s={18} /><span className="ml-[4px] w-[30px]">打开</span>
          <Ic n="orange" s={18} className="ml-[6px]" /><span className="ml-[4px] w-[110px]">关闭并打开部件</span>
          <div className="w-px h-[20px] bg-[#ccc] mt-[8px]" />
          <span className="ml-[14px] text-[#bbb] w-[192px]">撤消　　重做　　粘贴</span>
          <div className="w-px h-[20px] bg-[#ccc] mt-[8px]" />
          <Ic n="windowi" s={18} className="ml-[8px]" /><span className="ml-[4px] w-[75px]">窗口</span>
          <span className="w-[38px]">‹</span><span className="w-[38px]">›</span>
          <Ic n="open" s={16} /><span className="ml-[8px] w-[34px]">命令</span><span>▾</span>
          <span className="ml-[342px] w-[411px] text-[16px]">NX 12 - 草图</span>
          <span className="font-bold text-[#12909f] text-[16px] tracking-[1.5px] w-[113px]">SIEMENS</span>
          <div className="w-[12px] h-[2px] bg-[#333] mt-[14px]" />
          <div className="w-[15px] h-[14px] border border-[#333] ml-[16px] mt-[8px]" />
          <span className="ml-[17px] text-[#333]">✕</span>
        </div>
      </div>
      {/* tabs */}
      <div className="h-[37px] bg-[#d9d9d9] flex items-stretch text-[17.5px] text-[#444] shrink-0">
        <div className="w-[105px] bg-[#4a9cc2] text-[#cfe9f5] flex items-center justify-center">任务(T)</div>
        <div className="ml-[2px] w-[71px] bg-white border-t-2 border-[#c9c9c9] text-[#2a7f9f] flex items-center justify-center">主页</div>
        <div className="ml-[17px] flex items-center w-[70px]">分析</div>
        <div className="flex items-center w-[70px]">视图</div>
        <div className="flex items-center w-[70px]">工具</div>
        <div className="ml-auto flex items-center pr-[13px]">
          <div className="w-[168px] h-[26px] bg-white border-2 border-[#c9c9c9] flex items-center justify-between px-[1px] text-[14px] text-[#aaa]">
            <span>查找命令</span>
            <svg width="20" height="20" viewBox="0 0 20 20"><circle cx="12" cy="7" r="5" fill="#f4f4f4" stroke="#555" strokeWidth="1.4" /><path d="M8 11l-5 6" stroke="#555" strokeWidth="2.4" /></svg>
          </div>
          <Ic n="dock" s={20} className="ml-[14px]" />
          <svg width="16" height="14" viewBox="0 0 16 14" className="ml-[18px]"><path d="M2 11l6-8 6 8" stroke="#222" strokeWidth="2" fill="none" /></svg>
          <div className="ml-[20px] w-[17px] h-[21px] rounded-full bg-[#3f7fd8] text-white text-[14px] font-bold leading-[21px] text-center">?</div>
        </div>
      </div>
      <Ribbon />
      <Toolbar />
      {/* status */}
      <div className="h-[27px] flex items-center text-[15px] font-bold text-[#222] whitespace-nowrap shrink-0">
        <span className="w-[794px]">选择对象并使用 MB3，双击，按下左键并拖动来移动，或按住 Ctrl 键和左键拖动来复制</span>
        <span>草图需要 3 个约束</span>
        <div className="ml-auto flex items-center gap-[9px] pr-[55px]">
          <svg width="18" height="18" viewBox="0 0 20 20"><path d="M3 3l14-1 1 11-13 1zM5 19L3 3" fill="#777" stroke="#444" /><path d="M6 4h3v3H6zM12 3h3v3h-3zM9 7h3v3H9zM6 10h3v3H6zM12 9h3v3h-3z" fill="#eee" /></svg>
          <Ic n="dock" s={20} />
        </div>
      </div>
      {/* main */}
      <div className="h-[794px] flex shrink-0">
        <Rail />
        <Navigator />
        <div className="flex-1 flex flex-col relative">
          <div className="h-[33px] pt-[4px] shrink-0 bg-white">
            <div className="w-[180px] h-[29px] bg-[#4a9ac0] flex items-center pl-[8px] text-[16px]">
              <Ic n="sketch" s={20} />
              <span className="ml-[7px] text-[#223]">_model1.prt</span>
              <Ic n="docki" s={18} className="ml-[9px]" />
              <span className="ml-[5px] text-[#b5d6e6] font-bold">✕</span>
            </div>
          </div>
          <div className="h-[2px] bg-[#4a8fb0] shrink-0" />
          <div className="flex-1 relative bg-[#d3d5d7]">
            <Model />
            <Logo />
            <Watermark />
          </div>
        </div>
      </div>
      <div className="flex-1 bg-[#4a8fb5] z-10" />
    </div>
  );
}
